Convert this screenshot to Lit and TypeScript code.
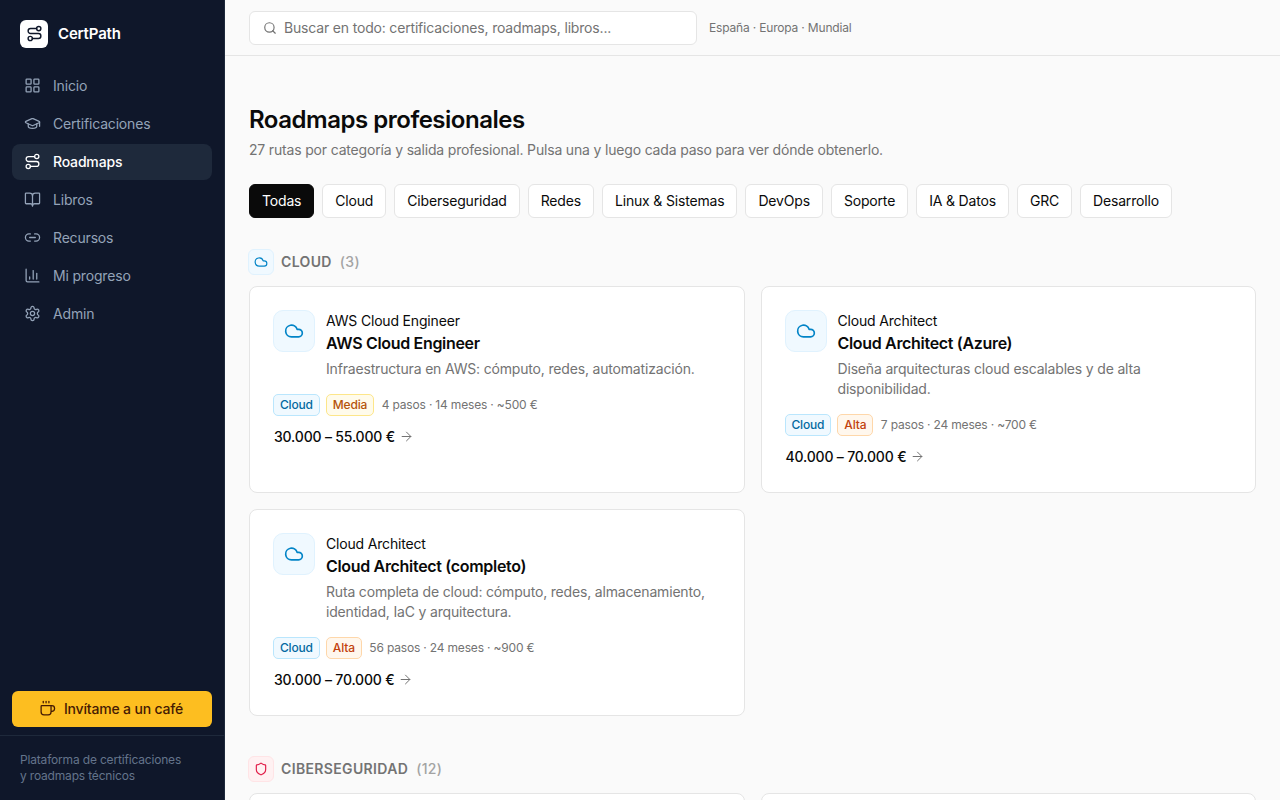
import { LitElement, html, css, svg } from "lit";
import { customElement } from "lit/decorators.js";

const ic = (c: unknown, size = 18, sw = 2) => html`<svg class="ic" width=${size} height=${size} viewBox="0 0 24 24" fill="none" stroke="currentColor" stroke-width=${sw} stroke-linecap="round" stroke-linejoin="round">${c}</svg>`;

const route = svg`<circle cx="6" cy="19" r="3"/><path d="M9 19h8.5a3.5 3.5 0 0 0 0-7h-11a3.5 3.5 0 0 1 0-7H15"/><circle cx="18" cy="5" r="3"/>`;
const cloud = svg`<path d="M17.5 19H9a7 7 0 1 1 6.71-9h1.79a4.5 4.5 0 1 1 0 9Z"/>`;
const shield = svg`<path d="M20 13c0 5-3.5 7.5-7.66 8.95a1 1 0 0 1-.67-.01C7.5 20.5 4 18 4 13V6a1 1 0 0 1 1-1c2 0 4.5-1.2 6.24-2.72a1.17 1.17 0 0 1 1.52 0C14.51 3.81 17 5 19 5a1 1 0 0 1 1 1z"/>`;

const nav = [
  ["Inicio", svg`<rect width="7" height="7" x="3" y="3" rx="1"/><rect width="7" height="7" x="14" y="3" rx="1"/><rect width="7" height="7" x="14" y="14" rx="1"/><rect width="7" height="7" x="3" y="14" rx="1"/>`],
  ["Certificaciones", svg`<path d="M21.42 10.922a1 1 0 0 0-.019-1.838L12.83 5.18a2 2 0 0 0-1.66 0L2.6 9.08a1 1 0 0 0 0 1.832l8.57 3.908a2 2 0 0 0 1.66 0z"/><path d="M22 10v6"/><path d="M6 12.5V16a6 3 0 0 0 12 0v-3.5"/>`],
  ["Roadmaps", route],
  ["Libros", svg`<path d="M12 7v14"/><path d="M3 18a1 1 0 0 1-1-1V4a1 1 0 0 1 1-1h5a4 4 0 0 1 4 4 4 4 0 0 1 4-4h5a1 1 0 0 1 1 1v13a1 1 0 0 1-1 1h-6a3 3 0 0 0-3 3 3 3 0 0 0-3-3z"/>`],
  ["Recursos", svg`<path d="M9 17H7A5 5 0 0 1 7 7h2"/><path d="M15 7h2a5 5 0 1 1 0 10h-2"/><line x1="8" x2="16" y1="12" y2="12"/>`],
  ["Mi progreso", svg`<path d="M3 3v16a2 2 0 0 0 2 2h16"/><path d="M18 17V9"/><path d="M13 17V5"/><path d="M8 17v-3"/>`],
  ["Admin", svg`<path d="M12.22 2h-.44a2 2 0 0 0-2 2v.18a2 2 0 0 1-1 1.73l-.43.25a2 2 0 0 1-2 0l-.15-.08a2 2 0 0 0-2.73.73l-.22.38a2 2 0 0 0 .73 2.73l.15.1a2 2 0 0 1 1 1.72v.51a2 2 0 0 1-1 1.74l-.15.09a2 2 0 0 0-.73 2.73l.22.38a2 2 0 0 0 2.73.73l.15-.08a2 2 0 0 1 2 0l.43.25a2 2 0 0 1 1 1.73V20a2 2 0 0 0 2 2h.44a2 2 0 0 0 2-2v-.18a2 2 0 0 1 1-1.73l.43-.25a2 2 0 0 1 2 0l.15.08a2 2 0 0 0 2.73-.73l.22-.39a2 2 0 0 0-.73-2.73l-.15-.08a2 2 0 0 1-1-1.74v-.5a2 2 0 0 1 1-1.74l.15-.09a2 2 0 0 0 .73-2.73l-.22-.38a2 2 0 0 0-2.73-.73l-.15.08a2 2 0 0 1-2 0l-.43-.25a2 2 0 0 1-1-1.73V4a2 2 0 0 0-2-2z"/><circle cx="12" cy="12" r="3"/>`],
] as const;

const chips = ["Todas", "Cloud", "Ciberseguridad", "Redes", "Linux & Sistemas", "DevOps", "Soporte", "IA & Datos", "GRC", "Desarrollo"];

const cards = [
  { role: "AWS Cloud Engineer", title: "AWS Cloud Engineer", desc: "Infraestructura en AWS: cómputo, redes, automatización.", level: "Media", meta: "4 pasos · 14 meses · ~500 €", pay: "30.000 – 55.000 €" },
  { role: "Cloud Architect", title: "Cloud Architect (Azure)", desc: "Diseña arquitecturas cloud escalables y de alta disponibilidad.", level: "Alta", meta: "7 pasos · 24 meses · ~700 €", pay: "40.000 – 70.000 €" },
  { role: "Cloud Architect", title: "Cloud Architect (completo)", desc: "Ruta completa de cloud: cómputo, redes, almacenamiento, identidad, IaC y arquitectura.", level: "Alta", meta: "56 pasos · 24 meses · ~900 €", pay: "30.000 – 70.000 €" },
];

@customElement("app-root")
export class AppRoot extends LitElement {
  static styles = css`
    :host { display: flex; width: 1280px; height: 800px; overflow: hidden; background: #fafafa; color: #0a0a0a;
      font-family: Inter, "Liberation Sans", sans-serif; font-size: 14px; letter-spacing: -0.176px; }
    * { box-sizing: border-box; }
    .ic { display: block; flex: none; }
    aside { width: 225px; flex: none; height: 800px; background: #0f172a; border-right: 1px solid #1e293b; display: flex; flex-direction: column; }
    .brand { display: flex; align-items: center; gap: 10px; padding: 0 20px; height: 67.5px; flex: none; color: #fff; font-weight: 600; font-size: 15px; }
    .logo { width: 28px; height: 28px; border-radius: 6px; background: #fff; color: #0f172a; display: flex; align-items: center; justify-content: center; }
    nav { padding: 0 12px; display: flex; flex-direction: column; gap: 2px; }
    .item { height: 36px; display: flex; align-items: center; gap: 12px; padding: 0 12px; border-radius: 8px; color: #94a3b8; font-size: 14px; }
    .item.on { background: #1e293b; color: #fff; font-weight: 500; }
    .foot { margin-top: auto; }
    .coffee { margin: 0 12px; height: 36px; padding: 0 2px 1px 0; border-radius: 6px; background: #fdbe20; color: #451a03; font-weight: 500; display: flex; align-items: center; justify-content: center; gap: 8px; }
    .tag { margin-top: 8px; border-top: 1px solid #1e293b; padding: 16px 20px 0; height: 65px; font-size: 12px; line-height: 16px; color: #64748b; }
    main { flex: 1; min-width: 0; height: 800px; overflow: hidden; }
    header { height: 56px; border-bottom: 1px solid #e5e5e5; padding: 0 24px; display: flex; align-items: center; gap: 12px; }
    .search { width: 448px; height: 34px; background: #fff; border: 1px solid #e5e5e5; border-radius: 6px; display: flex; align-items: center; gap: 7px; padding: 0 13px; color: #737373; font-size: 14px; }
    .scope { font-size: 12px; color: #737373; }
    .content { padding: 48px 24px 0; }
    h1 { margin: 0; font-size: 24px; line-height: 32px; font-weight: 600; letter-spacing: -0.48px; }
    .sub { margin: 4px 0 0; color: #737373; font-size: 14px; line-height: 20px; }
    .chips { display: flex; gap: 8px; margin-top: 24px; }
    .chip { height: 33.5px; padding: 0 12px; display: flex; align-items: center; background: #fff; border: 1px solid #e5e5e5; border-radius: 6px; font-size: 14px; }
    .chip.on { background: #0a0a0a; color: #fff; border-color: #0a0a0a; }
    .sec { display: flex; align-items: center; gap: 7px; margin-top: 31px; height: 26px; color: #737373; font-size: 14px; font-weight: 600; }
    .sec .name { letter-spacing: 0.35px; }
    .sec .n { font-weight: 500; color: #a3a3a3; margin-left: 1px; letter-spacing: 0.35px; }
    .sico { width: 26px; height: 26px; border-radius: 6px; display: flex; align-items: center; justify-content: center; margin-left: -1px; }
    .blue { background: #f0f9ff; border: 1px solid #e0f2fe; color: #0284c7; }
    .red { background: #fff1f2; border: 1px solid #ffe4e6; color: #e11d48; }
    .grid { display: grid; grid-template-columns: 1fr 1fr; gap: 16px; margin-top: 11px; margin-bottom: 40px; }
    .grid + .sec { margin-top: 0; }
    .card { height: 207px; background: #fff; border: 1px solid #e5e5e5; border-radius: 8px; padding: 23px; }
    .top { display: flex; gap: 11px; }
    .cico { width: 42px; height: 42px; border-radius: 10px; display: flex; align-items: center; justify-content: center; flex: none; }
    .role { font-size: 14px; line-height: 20px; margin-top: 1px; }
    .title { font-size: 16px; line-height: 24px; font-weight: 600; letter-spacing: -0.32px; }
    .desc { color: #737373; line-height: 20px; margin-top: 4px; font-size: 14px; }
    .meta { display: flex; align-items: center; gap: 7.5px; margin-top: 15px; font-size: 12px; color: #737373; }
    .badges { display: flex; gap: 6px; }
    .b { height: 22px; padding: 0 6px; border-radius: 5px; display: flex; align-items: center; font-size: 12px; font-weight: 500; }
    .b.cl { background: #f0f9ff; border: 1px solid #bae6fd; color: #0369a1; }
    .b.me { background: #fffbeb; border: 1px solid #fde68a; color: #b45309; }
    .b.al { background: #fff7ed; border: 1px solid #fed7aa; color: #c2410c; }
    .pay { display: flex; align-items: center; gap: 4px; margin-top: 11px; padding-left: 1px; font-size: 14px; font-weight: 500; line-height: 20px; }
    .pay .ic { color: #737373; }
    .stub { height: 40px; background: #fff; border: 1px solid #e5e5e5; border-radius: 8px; }
  `;

  render() {
    return html`
      <aside>
        <div class="brand"><div class="logo">${ic(route, 17)}</div>CertPath</div>
        <nav>
          ${nav.map(([l, p]) => html`<div class="item ${l === "Roadmaps" ? "on" : ""}">${ic(p, 17, 1.8)}<span>${l}</span></div>`)}
        </nav>
        <div class="foot">
          <div class="coffee">${ic(svg`<path d="M10 2v2"/><path d="M14 2v2"/><path d="M16 8a1 1 0 0 1 1 1v8a4 4 0 0 1-4 4H7a4 4 0 0 1-4-4V9a1 1 0 0 1 1-1h14a4 4 0 1 1 0 8h-1"/><path d="M6 2v2"/>`, 17, 1.8)}Invítame a un café</div>
          <div class="tag">Plataforma de certificaciones<br />y roadmaps técnicos</div>
        </div>
      </aside>
      <main>
        <header>
          <div class="search">${ic(svg`<path d="m21 21-4.34-4.34"/><circle cx="11" cy="11" r="8"/>`, 14)}<span>Buscar en todo: certificaciones, roadmaps, libros...</span></div>
          <span class="scope">España · Europa · Mundial</span>
        </header>
        <div class="content">
          <h1>Roadmaps profesionales</h1>
          <p class="sub">27 rutas por categoría y salida profesional. Pulsa una y luego cada paso para ver dónde obtenerlo.</p>
          <div class="chips">${chips.map((c, i) => html`<div class="chip ${i === 0 ? "on" : ""}">${c}</div>`)}</div>
          <div class="sec"><div class="sico blue">${ic(cloud, 14)}</div><span class="name">CLOUD</span><span class="n">(3)</span></div>
          <div class="grid">
            ${cards.map((c) => html`<div class="card">
              <div class="top">
                <div class="cico blue">${ic(cloud, 20)}</div>
                <div>
                  <div class="role">${c.role}</div>
                  <div class="title">${c.title}</div>
                  <div class="desc">${c.desc}</div>
                </div>
              </div>
              <div class="meta"><div class="badges"><div class="b cl">Cloud</div><div class="b ${c.level === "Media" ? "me" : "al"}">${c.level}</div></div><span>${c.meta}</span></div>
              <div class="pay">${c.pay} ${ic(svg`<path d="M5 12h14"/><path d="m12 5 7 7-7 7"/>`, 15, 1.6)}</div>
            </div>`)}
          </div>
          <div class="sec"><div class="sico red">${ic(shield, 14)}</div><span class="name">CIBERSEGURIDAD</span><span class="n">(12)</span></div>
          <div class="grid"><div class="stub"></div><div class="stub"></div></div>
        </div>
      </main>
    `;
  }
}
